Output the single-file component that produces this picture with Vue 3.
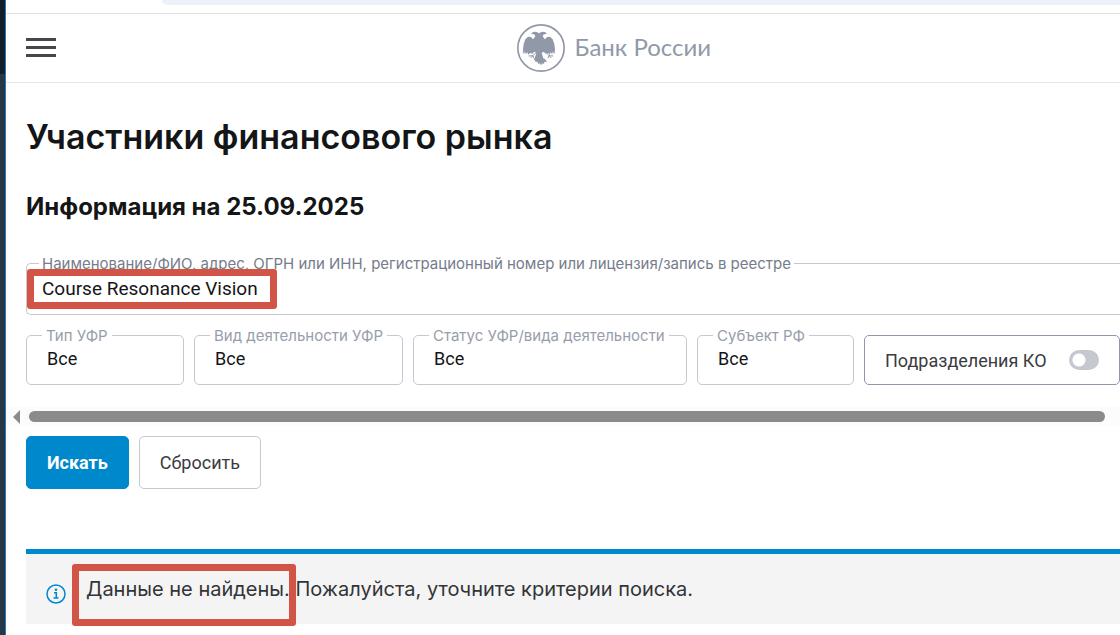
<template>
  <div class="window">
    <div class="desktop-edge"></div>
    <div class="browser">
      <div class="toolbar">
        <div class="address"></div>
      </div>

      <header class="header">
        <button class="menu-btn" type="button" aria-label="Меню">
          <span></span>
          <span></span>
          <span></span>
        </button>
        <a class="logo" href="#">
          <svg viewBox="0 0 144 144" aria-hidden="true">
            <circle cx="72" cy="72" r="69.5" fill="none" stroke="currentColor" stroke-width="5" />
            <g fill="currentColor">
              <path
                d="M72 52l-5-6-1-6 3-6-4-7-8-4-9 1-6 6 9 1 4 4-3 6-4 5-6-7-9-1-8 8-5 14-2 14 1 16 6-7 1 8 6-6 1 7 7-5 6 2 6-6 6 4-3 10-4 10 5 4h20l5-4-4-10-3-10 6-4 6 6 6-2 7 5 1-7 6 6 1-8 6 7 1-16-2-14-5-14-8-8-9 1-6 7-4-5-3-6 4-4 9-1-6-6-9-1-8 4-4 7 3 6-1 6z" />
              <path d="M61 104l-8 9 8 0 3 7 4-2 4 6 4-6 4 2 3-7 8 0-8-9z" />
            </g>
            <path fill="none" stroke="currentColor" stroke-width="3"
              d="M57 86l-9 9-13 1M48 95l-7 7M48 95l3 8M87 86l9 9 13 1M96 95l7 7M96 95l-3 8" />
          </svg>
          <span>Банк России</span>
        </a>
      </header>

      <main class="content">
        <h1>Участники финансового рынка</h1>
        <h2>Информация на 25.09.2025</h2>

        <form @submit.prevent>
          <div class="field search">
            <label for="query">Наименование/ФИО, адрес, ОГРН или ИНН, регистрационный номер или лицензия/запись в реестре</label>
            <input id="query" v-model="query" type="text">
            <div class="marker"></div>
          </div>

          <div class="filters">
            <div v-for="item in filters" :key="item.id" class="field">
              <label :for="item.id">{{ item.label }}</label>
              <select :id="item.id" v-model="item.value">
                <option>Все</option>
              </select>
            </div>
            <label class="switch">
              <span>Подразделения КО</span>
              <input v-model="withBranches" type="checkbox">
            </label>
          </div>

          <div class="scrollbar">
            <svg viewBox="0 0 7 14" aria-hidden="true">
              <path d="M7 0v14L0 7z" fill="#8b8b8b" />
            </svg>
            <div class="thumb"></div>
          </div>

          <div class="actions">
            <button class="btn primary" type="submit">Искать</button>
            <button class="btn" type="button" @click="reset">Сбросить</button>
          </div>
        </form>

        <div class="notice">
          <svg viewBox="0 0 20 20" aria-hidden="true">
            <circle cx="10" cy="10" r="9" fill="none" stroke="#0088cc" stroke-width="1.5" />
            <circle cx="10" cy="5.8" r="1.3" fill="#0088cc" />
            <path d="M8 8.8h2.3v5M7.5 14h5" fill="none" stroke="#0088cc" stroke-width="1.6" />
          </svg>
          <p><span class="marked">Данные не найдены.</span> Пожалуйста, уточните критерии поиска.</p>
        </div>
      </main>
    </div>
  </div>
</template>

<script setup>
import { ref } from 'vue'

const query = ref('Course Resonance Vision')
const withBranches = ref(false)

const filters = ref([
  { id: 'type', label: 'Тип УФР', value: 'Все' },
  { id: 'activity', label: 'Вид деятельности УФР', value: 'Все' },
  { id: 'status', label: 'Статус УФР/вида деятельности', value: 'Все' },
  { id: 'region', label: 'Субъект РФ', value: 'Все' }
])

const reset = () => {
  query.value = ''
  withBranches.value = false
  filters.value.forEach((item) => {
    item.value = 'Все'
  })
}
</script>

<style>
body {
  margin: 0;
}
</style>

<style scoped>
* {
  box-sizing: border-box;
}

.window {
  display: flex;
  min-height: 100vh;
  overflow: hidden;
  background: #fff;
  color: #141517;
  font-family: Inter, "Liberation Sans", sans-serif;
}

.desktop-edge {
  flex: 0 0 6px;
  border-right: 1px solid #2277bd;
  background: linear-gradient(#141e26 74px, #263746 74px);
}

.browser {
  flex: 1;
  min-width: 0;
}

.toolbar {
  height: 14px;
  padding-left: 156px;
  border-bottom: 1px solid #e2e2e2;
}

.address {
  height: 5px;
  border-radius: 0 0 0 16px;
  background: #edf1fa;
}

.header {
  display: grid;
  grid-template-columns: 6fr auto 5fr;
  align-items: center;
  height: 69px;
  padding-left: 20px;
  border-bottom: 1px solid #e8e8e8;
}

.menu-btn {
  display: flex;
  flex-direction: column;
  gap: 5px;
  width: 30px;
  padding: 0 0 2px;
  border: none;
  background: none;
  cursor: pointer;
}

.menu-btn span {
  height: 3px;
  background: #47474b;
}

.logo {
  display: flex;
  align-items: center;
  gap: 10px;
  color: #9199a8;
  font-family: Lato, "Open Sans", sans-serif;
  font-size: 24px;
  line-height: 28px;
  text-decoration: none;
}

.logo span {
  padding-bottom: 2px;
}

.logo svg {
  width: 48px;
  height: 48px;
}

.content {
  padding-left: 20px;
}

h1 {
  margin: 32px 0 0;
  font-size: 34px;
  font-weight: 600;
  line-height: 44px;
}

h2 {
  margin: 32px 0 0;
  font-size: 24px;
  font-weight: 700;
  line-height: 32px;
}

.field {
  position: relative;
  height: 50px;
  border: 1px solid #c5c8d0;
  border-radius: 5px;
}

.field label {
  position: absolute;
  top: -10px;
  left: 15px;
  padding: 0 4px;
  background: #fff;
  color: #979eab;
  font-size: 15px;
  line-height: 20px;
  white-space: nowrap;
}

.field input,
.field select {
  width: 100%;
  height: 100%;
  padding: 0 20px 3px;
  border: none;
  outline: none;
  appearance: none;
  background: none;
  color: #141517;
  font-family: Roboto, sans-serif;
  font-size: 18px;
}

.search {
  height: 52px;
  margin-top: 40px;
  border-right: none;
  border-radius: 5px 0 0 5px;
}

.search label {
  left: 12px;
  padding: 0 3px;
  color: #757c8b;
}

.search input {
  padding: 0 15px 2px;
  font-size: 19px;
}

.marker {
  position: absolute;
  top: 5px;
  left: 0;
  width: 250px;
  height: 40px;
  border: 7px solid #d25446;
  border-radius: 3px;
  pointer-events: none;
}

.filters {
  display: grid;
  grid-template-columns: 158fr 209fr 274fr 157fr 256fr;
  gap: 10px;
  margin-top: 20px;
}

.switch {
  display: flex;
  align-items: center;
  justify-content: space-between;
  padding: 0 20px;
  border: 1px solid #8f98a8;
  border-radius: 5px;
  color: #3a3b3f;
  font-family: Roboto, sans-serif;
  font-size: 18px;
  white-space: nowrap;
}

.switch input {
  width: 30px;
  height: 20px;
  margin: 0;
  appearance: none;
  border-radius: 10px;
  background: radial-gradient(circle at 10px 10px, #fff 6px, #c5c8cf 7px);
}

.switch input:checked {
  background: radial-gradient(circle at 20px 10px, #fff 6px, #0088cc 7px);
}

.scrollbar {
  display: flex;
  align-items: center;
  gap: 9px;
  height: 19px;
  margin: 22px 0 0 -20px;
  padding: 0 15px 0 7px;
  background: #fcfcfc;
}

.scrollbar svg {
  width: 7px;
  height: 14px;
}

.thumb {
  flex: 1;
  height: 11px;
  border-radius: 6px;
  background: #8b8b8b;
}

.actions {
  display: flex;
  gap: 10px;
  margin-top: 10px;
}

.btn {
  height: 53px;
  padding: 0 20px;
  border: 1px solid #c5c8d0;
  border-radius: 5px;
  background: #fff;
  color: #3a3b3f;
  font-family: Roboto, sans-serif;
  font-size: 18px;
  cursor: pointer;
}

.btn.primary {
  border-color: #0088cc;
  background: #0088cc;
  color: #fff;
  font-weight: 700;
}

.notice {
  display: flex;
  align-items: center;
  gap: 20px;
  height: 75px;
  margin-top: 60px;
  padding: 0 20px;
  border-top: 5px solid #0088cc;
  background: #f4f4f4;
  color: #333437;
  font-size: 20px;
}

.notice svg {
  flex: none;
  width: 20px;
  height: 20px;
  margin-top: 10px;
}

.notice p {
  margin: 0;
  line-height: 32px;
}

.marked {
  position: relative;
}

.marked::after {
  content: "";
  position: absolute;
  inset: -13px -6px -25px -14px;
  border: 7px solid #d25446;
  border-radius: 3px;
}
</style>
